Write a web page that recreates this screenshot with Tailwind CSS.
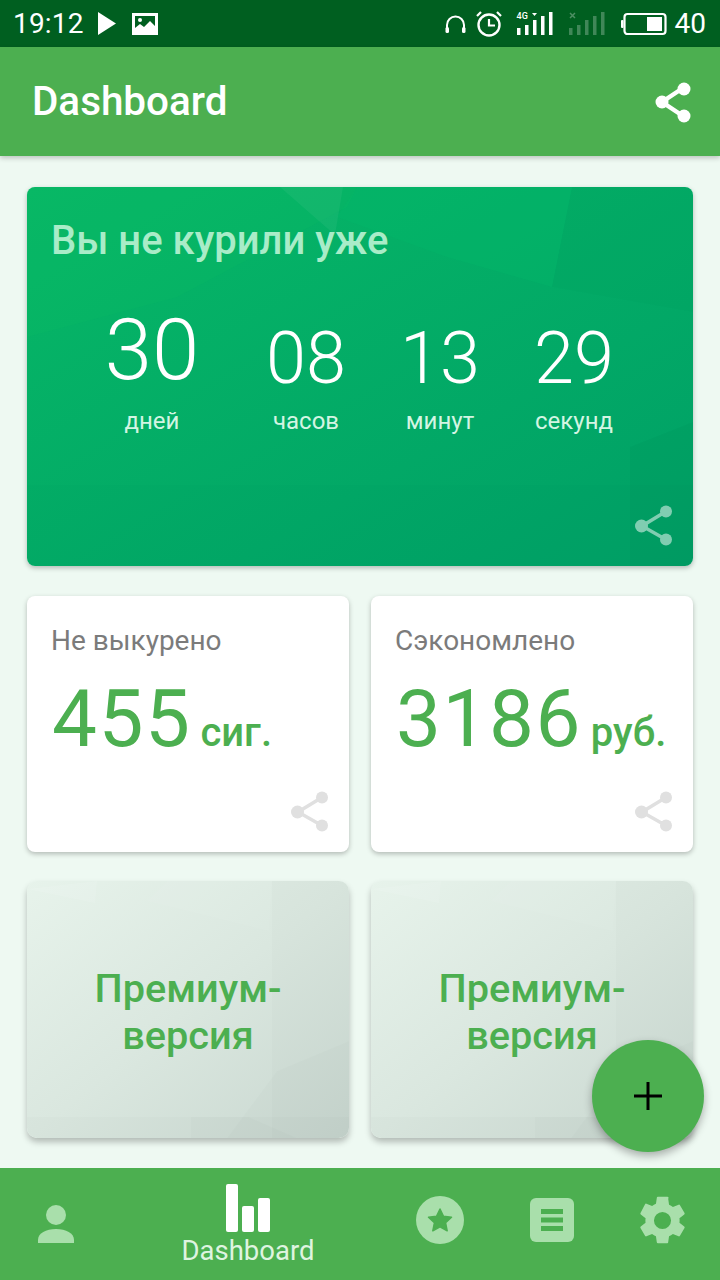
<!DOCTYPE html>
<html lang="ru">
<head>
<meta charset="utf-8">
<script src="https://cdn.jsdelivr.net/npm/@tailwindcss/browser@4"></script>
</head>
<body class="m-0">
<div class="relative w-[720px] h-[1280px] overflow-hidden bg-[#eef9f2] font-['Roboto',sans-serif] flex flex-col">

  <!-- status bar -->
  <div class="h-[47px] shrink-0 bg-[#005f20] flex items-center text-white pl-[13px] pr-[14px]">
    <span class="text-[28px] leading-none w-[70px] tracking-[0.2px]">19:12</span>
    <svg class="ml-[15px]" width="19" height="23" viewBox="0 0 19 23"><path d="M0 0 L18 11.500 L0 23Z" fill="#fff"/></svg>
    <svg class="ml-[15px]" width="26" height="22" viewBox="0 0 26 22"><path fill="#fff" fill-rule="evenodd" d="M0 0H26V22H0ZM3 3V15L8 11L12 14L18 8L23 13V3Z"/><circle cx="8" cy="7" r="2" fill="#fff"/></svg>
    <div class="flex-1"></div>
    <svg width="21" height="18" viewBox="0 0 21 18"><path d="M2 16V10a8.500 8.500 0 0 1 17 0V16" fill="none" stroke="#fff" stroke-width="2"/><rect x="0.500" y="12" width="3.500" height="6" rx="1.500" fill="#fff"/><rect x="17" y="12" width="3.500" height="6" rx="1.500" fill="#fff"/></svg>
    <svg class="ml-[10px]" width="26" height="26" viewBox="0 0 26 26"><circle cx="13" cy="14" r="10.500" fill="none" stroke="#fff" stroke-width="2.400"/><path d="M13 8V14.500H19" fill="none" stroke="#fff" stroke-width="2.200"/><path d="M1 5 L5 1M25 5 L21 1" stroke="#fff" stroke-width="2.200"/></svg>
    <div class="relative ml-[15px] w-[36px] h-[23px]">
      <span class="absolute left-[0px] top-[0px] text-[9px] font-medium leading-none">4G</span>
      <svg class="absolute left-0 top-0" width="36" height="23" viewBox="0 0 36 23"><path d="M15 1H20L17.500 4Z" fill="#fff"/><rect x="0" y="16" width="3.500" height="7" fill="#fff"/><rect x="8" y="13" width="3.500" height="10" fill="#fff"/><rect x="16" y="8" width="3.500" height="15" fill="#fff"/><rect x="24" y="4" width="3.500" height="19" fill="#fff"/><rect x="32" y="0" width="3.500" height="23" fill="#fff"/></svg>
    </div>
    <svg class="ml-[16px]" width="36" height="23" viewBox="0 0 36 23"><path d="M1 1 L6 6M6 1 L1 6" stroke="#fff" stroke-opacity=".3" stroke-width="1.500"/><g fill="#fff" fill-opacity=".25"><rect x="0" y="16" width="3.500" height="7"/><rect x="8" y="13" width="3.500" height="10"/><rect x="16" y="8" width="3.500" height="15"/><rect x="24" y="4" width="3.500" height="19"/><rect x="32" y="0" width="3.500" height="23"/></g></svg>
    <svg class="ml-[16px]" width="46" height="24" viewBox="0 0 46 24"><rect x="3.500" y="2" width="41" height="20" rx="3" fill="none" stroke="#fff" stroke-width="2.200"/><rect x="0" y="8" width="2.500" height="8" rx="1" fill="#fff"/><rect x="26" y="5" width="15" height="14" fill="#fff"/></svg>
    <span class="ml-[8px] text-[28px] leading-none">40</span>
  </div>

  <!-- app bar -->
  <div class="relative z-10 h-[109px] shrink-0 bg-[#4caf50] shadow-[0_2px_5px_rgba(0,0,0,0.22)] flex items-center justify-between pl-[32px] pr-[28px]">
    <span class="text-white text-[40.400px] leading-none font-medium mt-[2px]">Dashboard</span>
    <svg width="38" height="42" viewBox="0 0 38 42"><path d="M29 7 L8 21 L29 35" fill="none" stroke="#fff" stroke-width="4.500"/><circle cx="30" cy="8" r="6.500" fill="#fff"/><circle cx="8" cy="21" r="6.500" fill="#fff"/><circle cx="30" cy="35" r="6.500" fill="#fff"/></svg>
  </div>

  <!-- content -->
  <div class="flex-1 px-[27px] pt-[31px] flex flex-col gap-[30px]">
    <!-- main card -->
    <div class="relative h-[379px] rounded-[8px] overflow-hidden bg-gradient-to-br from-[#07b766] to-[#00a066] shadow-[0_2px_5px_rgba(0,0,0,0.25)]">
      <svg class="absolute inset-0" width="666" height="379" viewBox="0 0 666 379">
        <path d="M0 150L150 110L320 20L330 0H0Z" fill="#0abc62" fill-opacity=".25"/>
        <path d="M330 0H545L525 100L420 70L310 30Z" fill="#02bc6a" fill-opacity=".28"/>
        <path d="M525 100L545 0H666V125Z" fill="#000" fill-opacity=".012"/>
        <path d="M253 0H316L308 48Z" fill="#fff" fill-opacity=".05"/>
        <path d="M0 298H666V379H0Z" fill="#000" fill-opacity=".008"/>
        <path d="M603 260L666 235V379H603Z" fill="#000" fill-opacity=".025"/>
      </svg>
      <div class="relative pl-[24px] pt-[32px] text-[40px] leading-[44px] font-medium text-[#a9ecc8]">Вы не курили уже</div>
      <div class="relative mt-[42px] pl-[38px] flex items-end text-white">
        <div class="w-[174px] flex flex-col items-center"><span class="text-[85px] leading-[90px] font-light">30</span></div>
        <div class="w-[134px] flex flex-col items-center"><span class="text-[72px] leading-[90px] font-light mb-[-9px]">08</span></div>
        <div class="w-[134px] flex flex-col items-center"><span class="text-[72px] leading-[90px] font-light mb-[-9px]">13</span></div>
        <div class="w-[134px] flex flex-col items-center"><span class="text-[72px] leading-[90px] font-light mb-[-9px]">29</span></div>
      </div>
      <div class="relative pl-[38px] flex text-[24px] leading-[30px] text-[#d3f5e3] mt-[11px]">
        <span class="w-[174px] text-center">дней</span>
        <span class="w-[134px] text-center">часов</span>
        <span class="w-[134px] text-center">минут</span>
        <span class="w-[134px] text-center">секунд</span>
      </div>
      <svg class="absolute right-[20px] bottom-[19px]" width="38" height="42" viewBox="0 0 38 42"><g opacity=".5"><path d="M30 7 L7 21 L30 34" fill="none" stroke="#fff" stroke-width="3.500"/><circle cx="31" cy="6.500" r="6" fill="#fff"/><circle cx="6.500" cy="21" r="6.500" fill="#fff"/><circle cx="31" cy="34.500" r="6" fill="#fff"/></g></svg>
    </div>

    <!-- stats -->
    <div class="flex gap-[22px] h-[256px]">
      <div class="relative w-[322px] rounded-[8px] bg-white shadow-[0_2px_5px_rgba(0,0,0,0.25)] pl-[25px] pt-[29px]">
        <div class="text-[28px] leading-[32px] text-[#7b7b7b] ml-[-1px]">Не выкурено</div>
        <div class="flex items-baseline mt-[15px] text-[#4caf50]">
          <span class="text-[80px] leading-[94px] tracking-[1.500px]">455</span>
          <span class="text-[40px] font-medium ml-[9px]">сиг.</span>
        </div>
        <svg class="absolute right-[20px] bottom-[19px]" width="38" height="42" viewBox="0 0 38 42"><path d="M30 7 L7 21 L30 34" fill="none" stroke="#e0e0e0" stroke-width="3.500"/><circle cx="31" cy="6.500" r="6" fill="#e0e0e0"/><circle cx="6.500" cy="21" r="6.500" fill="#e0e0e0"/><circle cx="31" cy="34.500" r="6" fill="#e0e0e0"/></svg>
      </div>
      <div class="relative w-[322px] rounded-[8px] bg-white shadow-[0_2px_5px_rgba(0,0,0,0.25)] pl-[25px] pt-[29px]">
        <div class="text-[28px] leading-[32px] text-[#7b7b7b] ml-[-1px]">Сэкономлено</div>
        <div class="flex items-baseline mt-[15px] text-[#4caf50]">
          <span class="text-[80px] leading-[94px] tracking-[1.500px]">3186</span>
          <span class="text-[40px] font-medium ml-[9px]">руб.</span>
        </div>
        <svg class="absolute right-[20px] bottom-[19px]" width="38" height="42" viewBox="0 0 38 42"><path d="M30 7 L7 21 L30 34" fill="none" stroke="#e0e0e0" stroke-width="3.500"/><circle cx="31" cy="6.500" r="6" fill="#e0e0e0"/><circle cx="6.500" cy="21" r="6.500" fill="#e0e0e0"/><circle cx="31" cy="34.500" r="6" fill="#e0e0e0"/></svg>
      </div>
    </div>

    <!-- premium -->
    <div class="flex gap-[22px] h-[257px] mt-[-1px]">
      <div class="relative w-[322px] rounded-[10px] overflow-hidden bg-gradient-to-br from-[#e7f3eb] via-[#dae7df] to-[#c9d7d0] shadow-[0_4px_6px_rgba(0,0,0,0.25)] flex items-center justify-center">
        <svg class="absolute inset-0" width="322" height="257" viewBox="0 0 322 257">
          <path d="M0 8L70 0L68 22L0 8Z" fill="#fff" fill-opacity=".1"/>
          <path d="M140 0H245L242 50L120 20Z" fill="#fff" fill-opacity=".05"/>
          <path d="M245 0H322V257H245Z" fill="#000" fill-opacity=".012"/>
          <path d="M322 160V257H200L250 190Z" fill="#000" fill-opacity=".012"/>
          <path d="M0 236H322V257H0Z" fill="#000" fill-opacity=".012"/>
          <path d="M164 236H222L270 257H164Z" fill="#000" fill-opacity=".01"/>
        </svg>
        <div class="relative text-center text-[#4caf50] text-[39.700px] leading-[47px] font-medium mt-[4px]">Премиум-<br>версия</div>
      </div>
      <div class="relative w-[322px] rounded-[10px] overflow-hidden bg-gradient-to-br from-[#e7f3eb] via-[#dae7df] to-[#c9d7d0] shadow-[0_4px_6px_rgba(0,0,0,0.25)] flex items-center justify-center">
        <svg class="absolute inset-0" width="322" height="257" viewBox="0 0 322 257">
          <path d="M0 8L70 0L68 22L0 8Z" fill="#fff" fill-opacity=".1"/>
          <path d="M140 0H245L242 50L120 20Z" fill="#fff" fill-opacity=".05"/>
          <path d="M245 0H322V257H245Z" fill="#000" fill-opacity=".012"/>
          <path d="M322 160V257H200L250 190Z" fill="#000" fill-opacity=".012"/>
          <path d="M0 236H322V257H0Z" fill="#000" fill-opacity=".012"/>
          <path d="M164 236H222L270 257H164Z" fill="#000" fill-opacity=".01"/>
        </svg>
        <div class="relative text-center text-[#4caf50] text-[39.700px] leading-[47px] font-medium mt-[4px]">Премиум-<br>версия</div>
      </div>
    </div>
  </div>

  <!-- FAB -->
  <div class="absolute left-[592px] top-[1040px] z-20 w-[112px] h-[112px] rounded-full bg-[#4caf50] shadow-[0_4px_8px_rgba(0,0,0,0.3)] flex items-center justify-center">
    <svg width="30" height="30" viewBox="0 0 30 30"><path d="M15 1V29M1 15H29" stroke="#000" stroke-width="3"/></svg>
  </div>

  <!-- bottom nav -->
  <div class="relative h-[112px] shrink-0 bg-[#4caf50] flex">
    <div class="w-[112px] flex items-center justify-center">
      <svg width="38" height="38" viewBox="0 0 38 38"><circle cx="19" cy="10" r="10" fill="#a9dfab"/><path d="M1 38V35C1 28 9 24 19 24S37 28 37 35V38Z" fill="#a9dfab"/></svg>
    </div>
    <div class="w-[272px] flex flex-col items-center pt-[16px]">
      <svg width="44" height="48" viewBox="0 0 44 48"><rect x="0" y="0" width="12" height="48" rx="2" fill="#fff"/><rect x="16" y="22" width="12" height="26" rx="2" fill="#fff"/><rect x="32" y="14" width="12" height="34" rx="2" fill="#fff"/></svg>
      <span class="text-[27.500px] leading-[30px] text-[#dff4e0] mt-[4px]">Dashboard</span>
    </div>
    <div class="w-[112px] flex items-center justify-center pb-[8px]">
      <svg width="48" height="48" viewBox="0 0 48 48"><circle cx="24" cy="24" r="24" fill="#a9dfab"/><path d="M24 13L27.500 20.300L35.500 21.300L29.600 26.800L31.200 34.800L24 30.800L16.800 34.800L18.400 26.800L12.500 21.300L20.500 20.300Z" fill="#4caf50" stroke="#4caf50" stroke-width="1.500" stroke-linejoin="round"/></svg>
    </div>
    <div class="w-[112px] flex items-center justify-center pb-[8px]">
      <svg width="44" height="44" viewBox="0 0 44 44"><rect width="44" height="44" rx="6" fill="#a9dfab"/><path d="M11 11H33V16H11ZM11 19.500H33V24.500H11ZM11 28H33V33H11Z" fill="#4caf50"/></svg>
    </div>
    <div class="w-[112px] flex items-center justify-center pb-[8px] pr-[3px]">
      <svg width="57" height="57" viewBox="0 0 24 24"><path fill="#a9dfab" fill-rule="evenodd" d="M19.140 12.940c.04-.3.06-.61.06-.94s-.02-.64-.07-.94l2.030-1.580a.49.49 0 0 0 .12-.61l-1.920-3.320a.49.49 0 0 0-.59-.22l-2.390.96a7 7 0 0 0-1.620-.94l-.36-2.540A.48.48 0 0 0 13.920 2h-3.840a.47.47 0 0 0-.47.41l-.36 2.540c-.59.24-1.130.57-1.620.94l-2.390-.96a.48.48 0 0 0-.59.22L2.740 8.870a.47.47 0 0 0 .12.61l2.030 1.580c-.05.3-.09.63-.09.94s.02.64.07.94l-2.030 1.580a.49.49 0 0 0-.12.61l1.920 3.320c.12.22.37.29.59.22l2.390-.96c.5.38 1.030.7 1.620.94l.36 2.540c.05.24.24.41.48.41h3.840c.24 0 .44-.17.47-.41l.36-2.540c.59-.24 1.130-.56 1.620-.94l2.390.96c.22.08.47 0 .59-.22l1.920-3.320a.47.47 0 0 0-.12-.61zM12 15.600a3.600 3.600 0 1 1 0-7.200 3.600 3.600 0 0 1 0 7.200z"/></svg>
    </div>
  </div>
</div>
</body>
</html>
